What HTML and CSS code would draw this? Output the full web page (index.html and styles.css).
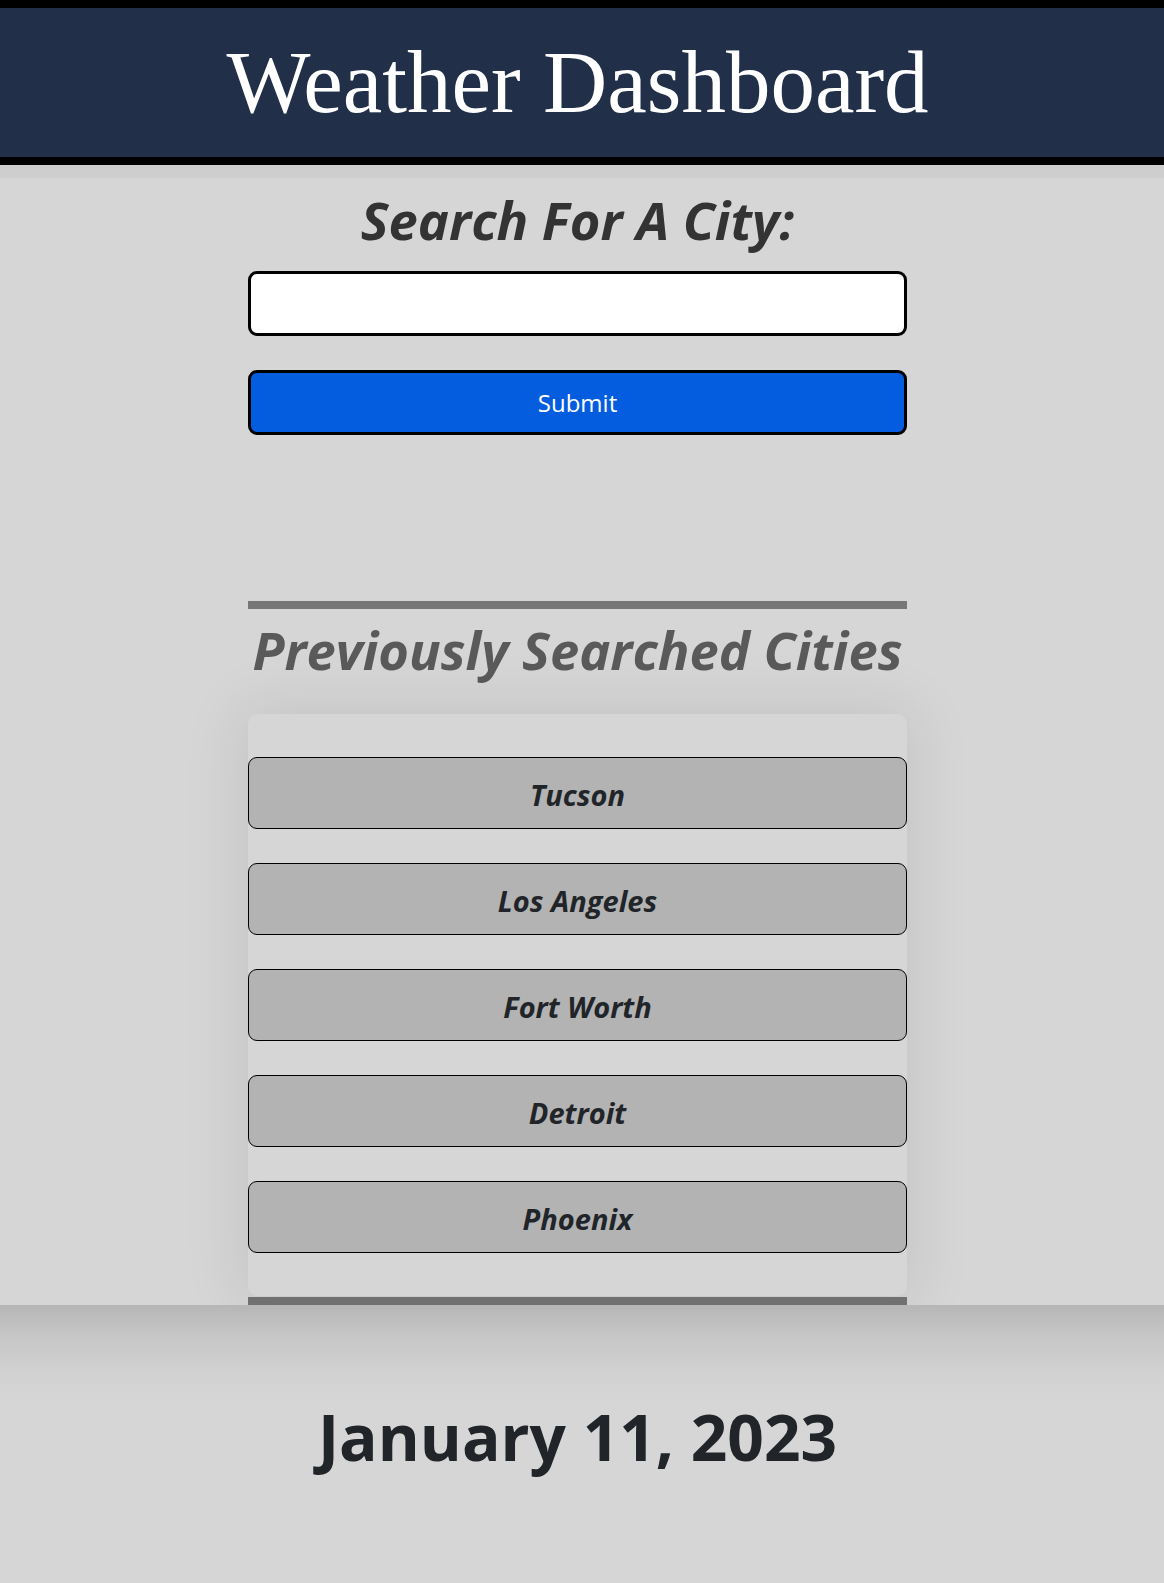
FILE: index.html
```html
<!DOCTYPE html>
<html lang="en">
<head>
<meta charset="utf-8">
<title>Weather Dashboard</title>
<link rel="stylesheet" href="styles.css">
</head>
<body>
<header class="site-header">
  <h1 class="site-title">Weather Dashboard</h1>
</header>
<main class="main">
  <section class="search">
    <h2 class="section-title">Search For A City:</h2>
    <input class="city-input" type="text" aria-label="City">
    <button class="submit-btn" type="button">Submit</button>
  </section>
  <section class="history">
    <div class="rule"></div>
    <h2 class="section-title muted">Previously Searched Cities</h2>
    <div class="city-card">
      <button class="city-btn" type="button">Tucson</button>
      <button class="city-btn" type="button">Los Angeles</button>
      <button class="city-btn" type="button">Fort Worth</button>
      <button class="city-btn" type="button">Detroit</button>
      <button class="city-btn" type="button">Phoenix</button>
    </div>
    <div class="rule rule-dark"></div>
  </section>
</main>
<section class="today">
  <h2 class="date">January 11, 2023</h2>
</section>
</body>
</html>
```
FILE: styles.css
```css
* { box-sizing: border-box; }

html, body {
  margin: 0;
  padding: 0;
  background: #d6d6d6;
}

body {
  font-family: "Open Sans", "Noto Sans", sans-serif;
  color: #212529;
  min-height: 1583px;
}

.site-header {
  background: #212f48;
  border-top: 8px solid #000;
  border-bottom: 8px solid #000;
  padding: 24px 9px 24px 0;
  box-shadow: 0 13px 0 #cecece;
  position: relative;
  z-index: 1;
}

.site-title {
  margin: 0;
  text-align: center;
  font-family: "Liberation Serif", "Times New Roman", serif;
  font-weight: 400;
  font-size: 89px;
  line-height: 101px;
  color: #fff;
}

.main {
  padding: 25px 9px 0 0;
  display: flex;
  flex-direction: column;
  align-items: center;
}

.search,
.history {
  width: 659px;
  display: flex;
  flex-direction: column;
}

.section-title {
  margin: 0;
  text-align: center;
  font-style: italic;
  font-weight: 700;
  font-size: 52.5px;
  line-height: 60px;
  color: #333;
}

.section-title.muted {
  color: #5a5a5a;
  margin-top: 11px;
}

.city-input {
  margin-top: 21px;
  height: 65px;
  border: 3px solid #000;
  border-radius: 9px;
  background: #fff;
  font-size: 24px;
  padding: 0 12px;
}

.submit-btn {
  margin-top: 34px;
  height: 65px;
  border: 3px solid #000;
  border-radius: 9px;
  background: #045ddf;
  color: #fff;
  font-family: "Open Sans", "Noto Sans", sans-serif;
  font-size: 24px;
  padding: 0;
}

.history {
  margin-top: 166px;
}

.rule {
  height: 8px;
  background: #777;
}

.rule-dark {
  background: #717171;
  margin-top: 1px;
}

.city-card {
  margin-top: 34px;
  padding: 43px 0;
  background: #d6d6d6;
  border-radius: 10px;
  box-shadow: 0 0 60px 10px rgba(0, 0, 0, 0.08);
  display: flex;
  flex-direction: column;
  gap: 34px;
}

.city-btn {
  height: 72px;
  border: 1px solid #000;
  border-radius: 9px;
  background: #b3b3b3;
  color: #212529;
  font-family: "Open Sans", "Noto Sans", sans-serif;
  font-style: italic;
  font-weight: 700;
  font-size: 29px;
  padding: 3px 0 0;
}

.today {
  position: relative;
  padding: 92px 9px 80px 0;
  background: linear-gradient(to bottom, #b6b6b6 0px, #c6c6c6 30px, #d2d2d2 70px, #d6d6d6 100px);
}

.date {
  margin: 0;
  text-align: center;
  font-weight: 700;
  font-size: 64px;
  line-height: 80px;
  color: #212529;
}
```
